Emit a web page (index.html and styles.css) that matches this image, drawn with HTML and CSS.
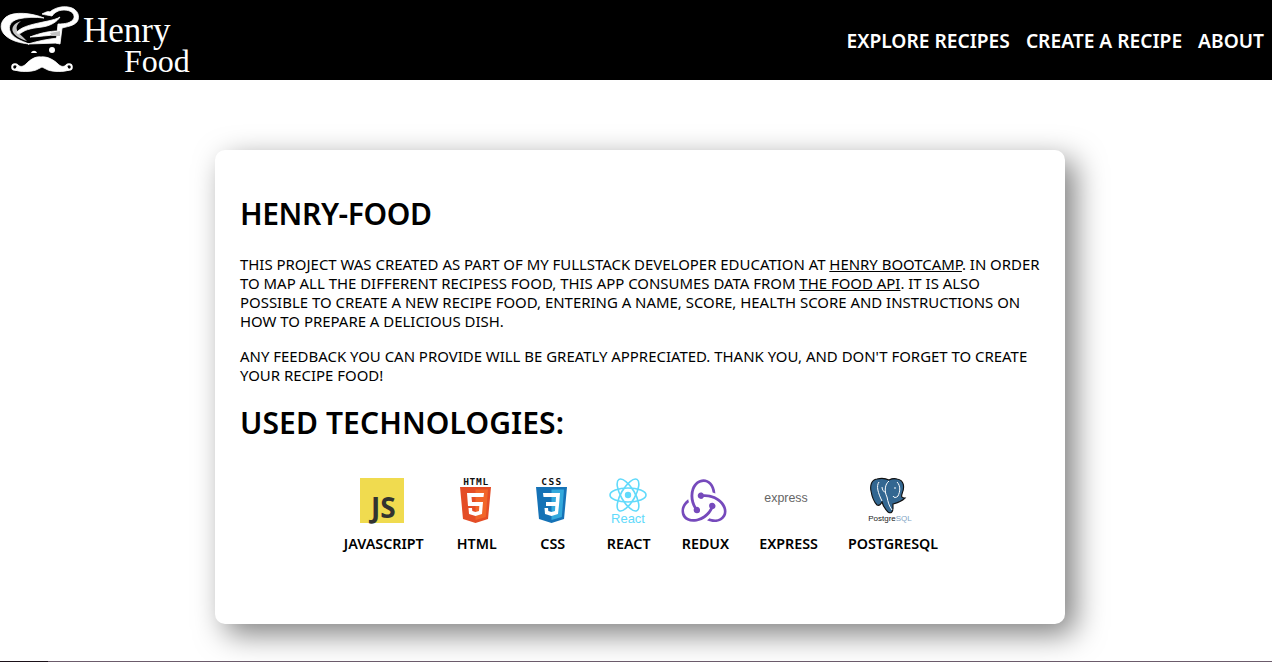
FILE: index.html
```html
<!DOCTYPE html>
<html lang="en">
<head>
<meta charset="utf-8">
<title>Henry Food</title>
<link rel="stylesheet" href="styles.css">
</head>
<body>
<header class="navbar">
  <a class="brand" href="#">
    <svg class="brand-icon" viewBox="0 0 80 80" aria-hidden="true">
      <path class="logo-white" d="M44 18C32 13 14 11 6 17C-1 23 0 31 6 36C12 41 20 43 29 44C22 41 12 38 10 31C8 26 11 21 18 19C26 17 36 17 44 18Z"/>
      <path fill="#c4c4c4" d="M21 21C14 23 11 28 13 32C15 36 20 39 27 41C22 36 18 33 17 30C16 27 17 24 21 21Z"/>
      <path class="logo-white" d="M17 32C22 26 34 24 48 21C52 20 57 19 60 17C57 22 50 26 42 27C34 28 26 29 21 33C19 34 17 34 17 32Z"/>
      <path class="logo-white" d="M42 14C46 12 48 11 50 12C54 8 62 6 68 7C76 8 80 14 78 20C76 25 70 26 62 28L60 44L56 43L58 24C65 24 72 23 74 18C75 13 70 10 64 10C58 10 54 13 52 16C48 15 45 15 42 14Z"/>
      <path class="logo-white" d="M30 37C40 33 50 31 58 31L58 35C48 35 38 37 30 37Z"/>
      <path fill="#c4c4c4" d="M50 33L60 31L60 36L52 36Z"/>
      <path class="logo-white" d="M28 44C38 41 48 39 58 38L58 43C48 43 38 44 28 44Z"/>
      <circle cx="52" cy="50" r="3" fill="#fff"/>
      <path fill="#fff" d="M31 53C32 50 36 50 37 53Z"/>
      <path class="logo-white" d="M41 57C35 56 30 60 26 64C23 67 20 67 18 65L15 70C20 72 30 72 36 70C38 69 40 68 42 67C44 68 46 69 48 70C54 72 64 72 69 70L66 65C64 67 61 67 58 64C54 60 47 56 41 57Z"/>
      <circle cx="15" cy="67" r="2.800" fill="none" stroke="#fff" stroke-width="2"/>
      <circle cx="69" cy="67" r="2.800" fill="none" stroke="#fff" stroke-width="2"/>
    </svg>
    <span class="brand-text"><span class="brand-line">Henry</span><span class="brand-line brand-line-second">Food</span></span>
  </a>
  <nav class="nav-links">
    <a href="#">EXPLORE RECIPES</a>
    <a href="#">CREATE A RECIPE</a>
    <a href="#">ABOUT</a>
  </nav>
</header>
<main class="page">
  <section class="card">
    <h1 class="title">HENRY-FOOD</h1>
    <p>THIS PROJECT WAS CREATED AS PART OF MY FULLSTACK DEVELOPER EDUCATION AT <a href="#">HENRY BOOTCAMP</a>. IN ORDER TO MAP ALL THE DIFFERENT RECIPESS FOOD, THIS APP CONSUMES DATA FROM <a href="#">THE FOOD API</a>. IT IS ALSO POSSIBLE TO CREATE A NEW RECIPE FOOD, ENTERING A NAME, SCORE, HEALTH SCORE AND INSTRUCTIONS ON HOW TO PREPARE A DELICIOUS DISH.</p>
    <p>ANY FEEDBACK YOU CAN PROVIDE WILL BE GREATLY APPRECIATED. THANK YOU, AND DON'T FORGET TO CREATE YOUR RECIPE FOOD!</p>
    <h1 class="subtitle">USED TECHNOLOGIES:</h1>
    <ul class="tech-list">
      <li class="tech">
        <svg class="tech-icon tech-icon-js" viewBox="0 0 46 46"><rect x="1" y="1" width="44" height="45" fill="#f0db4f"/><text x="12" y="41" class="js-mark">JS</text></svg>
        <span>JAVASCRIPT</span>
      </li>
      <li class="tech">
        <svg class="tech-icon" viewBox="0 0 46 46"><text x="23" y="8" class="badge-title badge-html">HTML</text><path fill="#e44d26" d="M7 10H38L35 42L22.500 46L10 42Z"/><path fill="#f16529" d="M22.500 12.500H35L32.800 40L22.500 43Z"/><path fill="#fff" d="M14 16H31L30.500 20H18.500L19 25H30L29 37L22.500 39L16 37L15.500 31H19L19.300 34L22.500 35L26 34L26.300 29H15Z"/></svg>
        <span>HTML</span>
      </li>
      <li class="tech">
        <svg class="tech-icon" viewBox="0 0 46 46"><text x="23" y="8" class="badge-title badge-css">CSS</text><path fill="#1572b6" d="M7 10H38L35 42L22.500 46L10 42Z"/><path fill="#33a9dc" d="M22.500 12.500H35L32.800 40L22.500 43Z"/><path fill="#fff" d="M14 16H31L30 28L29 37L22.500 39L16 37L15.500 31H19L19.300 34L22.500 35L26 34L26.300 29H17V25H26.700L27 20H14.500Z"/></svg>
        <span>CSS</span>
      </li>
      <li class="tech">
        <svg class="tech-icon" viewBox="0 0 46 46"><g fill="none" stroke="#61dafb" stroke-width="1.600"><ellipse cx="23" cy="18" rx="18" ry="7"/><ellipse cx="23" cy="18" rx="18" ry="7" transform="rotate(60 23 18)"/><ellipse cx="23" cy="18" rx="18" ry="7" transform="rotate(120 23 18)"/></g><circle cx="23" cy="18" r="3.200" fill="#61dafb"/><text x="23" y="45.500" class="react-mark">React</text></svg>
        <span>REACT</span>
      </li>
      <li class="tech">
        <svg class="tech-icon" viewBox="0 0 46 46"><path transform="translate(0.500 1.200) scale(1.875)" fill="#764abc" d="M16.634 16.504c.87-.075 1.543-.84 1.5-1.754-.047-.914-.796-1.648-1.709-1.648h-.061a1.71 1.71 0 00-1.648 1.769c.03.479.226.869.494 1.153-1.048 2.038-2.621 3.536-5.005 4.795-1.603.838-3.296 1.154-4.944.93-1.378-.195-2.456-.81-3.116-1.799-.988-1.499-1.078-3.116-.255-4.734.6-1.17 1.499-2.023 2.099-2.443a9.96 9.96 0 01-.42-1.543C-.868 14.408-.416 18.752.932 20.805c1.004 1.498 3.057 2.456 5.304 2.456.6 0 1.23-.044 1.843-.194 3.897-.749 6.848-3.086 8.541-6.532zm5.348-3.746c-2.32-2.728-5.738-4.226-9.634-4.226h-.51c-.253-.554-.837-.899-1.498-.899h-.045c-.943 0-1.678.81-1.647 1.753.03.898.794 1.648 1.708 1.648h.074a1.69 1.69 0 001.499-1.049h.555c2.309 0 4.495.674 6.488 1.992 1.527 1.004 2.622 2.322 3.237 3.896.538 1.288.509 2.547-.045 3.597-.855 1.647-2.294 2.517-4.196 2.517-1.199 0-2.367-.375-2.967-.644-.36.298-.96.793-1.394 1.093 1.318.598 2.652.943 3.94.943 2.922 0 5.094-1.647 5.919-3.236.898-1.798.824-4.824-1.47-7.416zM6.490 17.042c.03.899.793 1.648 1.708 1.648h.06a1.688 1.688 0 001.648-1.768c0-.9-.779-1.647-1.693-1.647h-.06c-.06 0-.15 0-.226.029-1.243-2.098-1.768-4.347-1.572-6.772.12-1.828.72-3.417 1.797-4.735.9-1.124 2.593-1.68 3.747-1.708 3.236-.061 4.585 3.971 4.689 5.574l1.498.45C17.741 3.197 14.686.62 11.764.62 9.020.62 6.490 2.613 5.470 5.535 4.077 9.430 4.991 13.177 6.700 16.174c-.15.195-.24.539-.21.868z"/></svg>
        <span>REDUX</span>
      </li>
      <li class="tech">
        <svg class="tech-icon tech-icon-shifted" viewBox="0 0 46 46"><text x="23" y="25" class="express-mark">express</text></svg>
        <span>EXPRESS</span>
      </li>
      <li class="tech">
        <svg class="tech-icon tech-icon-shifted" viewBox="0 0 46 46"><path fill="#336791" stroke="#111" stroke-width="1.100" d="M10 2C4 3 3 9 4 14C5 20 7 25 10 28C12 29 14 27 15 25C16 29 19 33 21 35C24 37 26 35 26 31V27C30 26 35 24 38 21C35 21 34 20 35 17C38 10 37 3 30 2C26 1 24 2 22 3C18 1 14 1 10 2Z"/><path fill="none" stroke="#fff" stroke-width="1" d="M12 5C9 9 11 16 15 24M22 4C18 7 17 14 20 20C21 25 22 29 25 33M30 5C34 9 33 15 31 19C29 21 27 21 26 19M15 10C15 13 17 15 19 16M28 10L28 12"/><text x="23" y="44" class="pg-mark">Postgre<tspan class="pg-accent">SQL</tspan></text></svg>
        <span>POSTGRESQL</span>
      </li>
    </ul>
  </section>
</main>
<div class="bottom-edge"><span class="bottom-edge-dark"></span></div>
</body>
</html>
```

FILE: styles.css
```css
* { box-sizing: border-box; }
html, body { height: 100%; }
body {
  margin: 0;
  background: #fff;
  color: #000;
  font-family: "Noto Sans", "Open Sans", sans-serif;
  overflow: hidden;
  display: flex;
  flex-direction: column;
}
a { color: inherit; }
.navbar {
  height: 80px;
  flex: none;
  background: #000;
  display: flex;
  align-items: center;
  justify-content: space-between;
  padding-right: 8px;
}
.brand {
  display: flex;
  align-items: flex-start;
  height: 80px;
  text-decoration: none;
  color: #fff;
}
.brand-icon { width: 80px; height: 80px; display: block; flex: none; }
.logo-white { fill: #fff; stroke: #fff; stroke-width: 0.800; }
.brand-text {
  display: flex;
  flex-direction: column;
  font-family: "Liberation Serif", serif;
  font-size: 35px;
  line-height: 30px;
  padding-top: 16px;
  margin-left: 3px;
}
.brand-line-second { margin-left: 41px; font-size: 32px; }
.nav-links {
  display: flex;
  gap: 16px;
  font-size: 19.200px;
  font-weight: 600;
  color: #fff;
}
.nav-links a { text-decoration: none; }
.page {
  flex: 1;
  display: flex;
  justify-content: center;
  padding-top: 70px;
  padding-left: 8px;
  min-height: 0;
}
.card {
  width: 850px;
  height: 474px;
  background: #fff;
  border-radius: 10px;
  box-shadow: 10px 10px 30px rgba(0, 0, 0, 0.5);
  padding: 45px 23px 0 25px;
}
h1 {
  font-size: 30px;
  line-height: 38px;
  font-weight: 600;
  margin: 0;
}
.title { margin-bottom: 22px; letter-spacing: -0.400px; }
.subtitle { margin-top: 19px; margin-bottom: 35px; letter-spacing: 0.100px; }
p {
  font-size: 14.950px;
  line-height: 19px;
  margin: 0 0 16px;
}
.tech-list {
  list-style: none;
  margin: 0;
  padding: 0;
  display: flex;
  justify-content: center;
  gap: 30px;
}
.tech {
  display: flex;
  flex-direction: column;
  align-items: center;
  gap: 12px;
  font-size: 14.300px;
  font-weight: 600;
  line-height: 18px;
}
.tech-icon { width: 46px; height: 46px; display: block; overflow: visible; margin: 0 1px 0 -1px; }
.tech-icon-js { margin: 0 2px 0 -2px; }
.tech-icon-shifted { margin: 0 3px 0 -3px; }
.js-mark { font: 700 28px "Open Sans", sans-serif; fill: #323330; }
.badge-title { font: 700 9.500px "DejaVu Sans Mono", monospace; text-anchor: middle; fill: #111; }
.badge-html { letter-spacing: 0.700px; }
.badge-css { letter-spacing: 1.500px; }
.react-mark { font: 400 13px "Liberation Sans", sans-serif; text-anchor: middle; fill: #61dafb; }
.express-mark { font: 400 12.400px "Liberation Sans", sans-serif; text-anchor: middle; fill: #666; }
.pg-mark { font: 400 8px "Liberation Sans", sans-serif; text-anchor: middle; fill: #222; }
.pg-accent { fill: #7fa4c4; }
.bottom-edge {
  height: 1px;
  flex: none;
  background: #6b5b6b;
}
.bottom-edge-dark { display: block; width: 48px; height: 1px; background: #1a1018; }
```
